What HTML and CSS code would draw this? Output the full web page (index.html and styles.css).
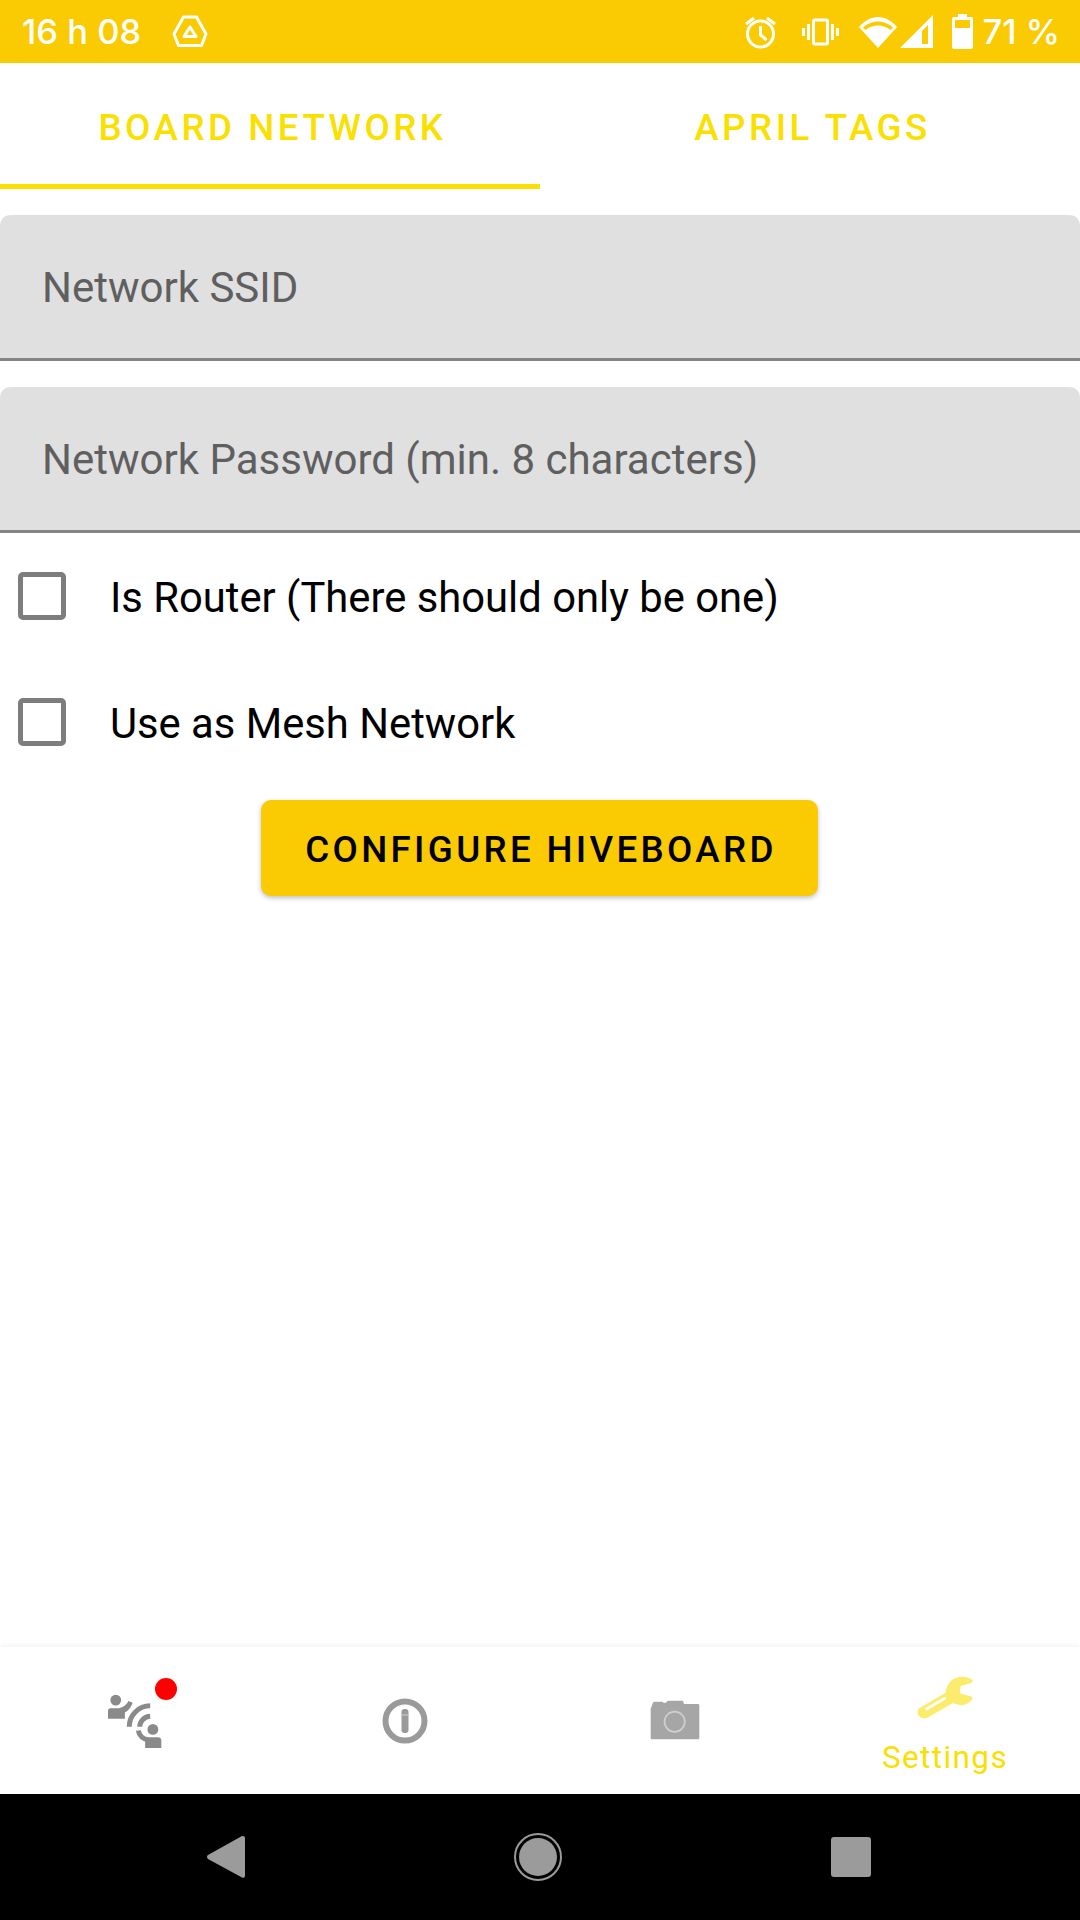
FILE: index.html
```html
<!DOCTYPE html>
<html lang="en">
<head>
    <meta charset="UTF-8">
    <meta name="viewport" content="width=device-width, initial-scale=1.0">
    <title>Settings</title>
    <link rel="stylesheet" href="styles.css">
</head>
<body>
    <div class="status-bar">
        <div class="status-left">
            <span class="status-time">16 h 08</span>
            <svg class="icon-drive" width="36" height="33" viewBox="0 0 36 33" fill="none" stroke="#fff" stroke-width="3" stroke-linejoin="round">
                <path d="M11.500 2h13l9.500 17-4.500 11.500H6.500L2 19z"/>
                <path d="M18 12l6 9.500H12z"/>
            </svg>
        </div>
        <div class="status-right">
            <svg class="icon-alarm" width="33" height="34" viewBox="0 0 33 34" fill="none" stroke="#fff" stroke-width="3">
                <circle cx="16.5" cy="19" r="13"/>
                <path d="M16.5 11v9l6 5"/>
                <path d="M2 9l8-6M31 9l-8-6"/>
            </svg>
            <svg class="icon-vibrate" width="37" height="28" viewBox="0 0 37 28" fill="none" stroke="#fff" stroke-width="3">
                <rect x="11.5" y="2" width="14" height="24" rx="1.5"/>
                <path d="M6.5 6v16M1.5 10v8M30.5 6v16M35.5 10v8"/>
            </svg>
            <svg class="icon-wifi" width="40" height="32" viewBox="0 0 40 32">
                <path fill="#fff" d="M20 32L1 11C6 5 13 1 20 1s14 4 19 10z"/>
                <path fill="#facb02" d="M20 8.500c-4.500 0-9 1.500-12.500 4.500L5 10.500C9 7 14.500 4.500 20 4.500S31 7 35 10.500L32.500 13C29 10 24.500 8.500 20 8.500z" transform="translate(0 1)"/>
            </svg>
            <svg class="icon-signal" width="33" height="33" viewBox="0 0 33 33">
                <path fill="#fff" d="M33 0v33H0z"/>
                <path fill="#facb02" d="M28 10v19h-6V16z"/>
            </svg>
            <svg class="icon-battery" width="21" height="35" viewBox="0 0 21 35">
                <path fill="#fff" d="M6 0h9v3h4a2 2 0 0 1 2 2v28a2 2 0 0 1-2 2H2a2 2 0 0 1-2-2V5a2 2 0 0 1 2-2h4z"/>
                <rect fill="#facb02" x="3" y="6" width="15" height="8"/>
            </svg>
            <span class="status-battery">71 %</span>
        </div>
    </div>

    <div class="tabs">
        <div class="tab tab-active">BOARD NETWORK</div>
        <div class="tab">APRIL TAGS</div>
    </div>

    <main class="content">
        <div class="field">Network SSID</div>
        <div class="field">Network Password (min. 8 characters)</div>

        <label class="check-row">
            <span class="check-box"></span>
            <span>Is Router (There should only be one)</span>
        </label>
        <label class="check-row">
            <span class="check-box"></span>
            <span>Use as Mesh Network</span>
        </label>

        <div class="button-row">
            <button class="configure-btn">CONFIGURE HIVEBOARD</button>
        </div>
    </main>

    <nav class="bottom-nav">
        <div class="nav-item">
            <span class="nav-icon-wrap">
                <svg class="nav-icon-soft" width="54" height="54" viewBox="85 100 160 160" fill="#8a8a8a">
                    <circle cx="108" cy="118" r="16"/>
                    <path d="M85 173V150q0-8 8-8h25c12-2 22-10 28-21l12 5c-6 16-13 24-23 29v18z"/>
                    <path d="M210 135a62 62 0 0 0-62 62M210 166a32 32 0 0 0-31 31M175 208a32 32 0 0 0 30 28" fill="none" stroke="#8a8a8a" stroke-width="15"/>
                    <circle cx="218" cy="205" r="16"/>
                    <path d="M195 260V238q0-10 10-10h27q11 0 11 10v22z"/>
                </svg>
                <span class="nav-badge"></span>
            </span>
        </div>
        <div class="nav-item">
            <svg class="nav-icon-soft" width="46" height="46" viewBox="0 0 46 46">
                <circle cx="23" cy="23" r="19.500" fill="none" stroke="#9a9a9a" stroke-width="6"/>
                <rect x="19.500" y="11" width="7" height="24" rx="3" fill="#9a9a9a"/>
                <rect x="19.500" y="16.500" width="7" height="1" fill="#d0d0d0"/>
            </svg>
        </div>
        <div class="nav-item nav-item-camera">
            <svg class="nav-icon-soft" width="50" height="40" viewBox="90 120 148 118">
                <path fill="#a6a6a6" d="M92 146l6-16q0-5 5-5h22q5 0 5 4l8-2q2-5 7-5h40q5 0 5 10h42q4 0 4 4v96q0 4-4 4H96q-4 0-4-4z"/>
                <circle cx="163" cy="184" r="30" fill="none" stroke="#cfcfcf" stroke-width="5"/>
            </svg>
        </div>
        <div class="nav-item nav-item-active">
            <svg class="nav-icon-soft" width="60" height="45" viewBox="885 50 180 135">
                <path fill="#fcec6e" d="M1015 57c15-4 33 1 43 8l-2 8-34 10-2 22 36 10 2 7c-10 12-28 21-38 18l-22-5-76 43c-10 5-24 2-28-10-3-9 0-16 6-20l77-45c2-20 15-43 38-46z"/>
                <path fill="#fff" d="M915 150l60-35 4 7-60 35z"/>
            </svg>
            <span class="nav-label">Settings</span>
        </div>
    </nav>

    <div class="system-nav">
        <svg width="38" height="44" viewBox="0 0 38 44">
            <path fill="#9b9b9b" d="M36 1a2 2 0 0 1 2 2v38a2 2 0 0 1-3 1.500L1 24a2.500 2.500 0 0 1 0-4L35 1z"/>
        </svg>
        <svg width="48" height="48" viewBox="0 0 48 48">
            <circle cx="24" cy="24" r="23" fill="none" stroke="#9b9b9b" stroke-width="2"/>
            <circle cx="24" cy="24" r="19" fill="#9b9b9b"/>
        </svg>
        <span class="recent-square"></span>
    </div>
</body>
</html>
```

FILE: styles.css
```css
* {
    box-sizing: border-box;
}
body {
    margin: 0;
    width: 1080px;
    height: 1920px;
    display: flex;
    flex-direction: column;
    font-family: Roboto, sans-serif;
    background-color: #fff;
    overflow: hidden;
}

.status-bar {
    height: 63px;
    background-color: #facb02;
    color: #fff;
    display: flex;
    align-items: center;
    justify-content: space-between;
    padding: 0 20px 0 22px;
    font-family: Inter, sans-serif;
    font-size: 34.5px;
    font-weight: 500;
}
.status-left,
.status-right {
    display: flex;
    align-items: center;
}
.status-left {
    gap: 31px;
}
.status-right .icon-alarm {
    margin-right: 24.5px;
}
.status-right .icon-vibrate {
    margin-right: 19px;
}
.status-right .icon-wifi {
    margin-right: 2px;
}
.status-right .icon-signal {
    margin-right: 19px;
}
.status-right .icon-battery {
    margin-right: 10px;
}

.tabs {
    height: 126px;
    display: flex;
}
.tab {
    flex: 1;
    display: flex;
    align-items: center;
    justify-content: center;
    padding: 2px 0 0 5px;
    color: #f9e000;
    font-size: 36.75px;
    font-weight: 500;
    letter-spacing: 3.5px;
}
.tab-active {
    box-shadow: inset 0 -5px 0 #f9e000;
}

.content {
    flex: 1;
}
.field {
    height: 146px;
    margin-top: 26px;
    padding: 2px 0 0 42px;
    display: flex;
    align-items: center;
    background-color: #e0e0e0;
    border-bottom: 3px solid #858585;
    border-radius: 10px 10px 0 0;
    color: #5f5f5f;
    font-size: 42px;
}
.check-row {
    height: 126px;
    padding: 0 0 0 18px;
    display: flex;
    align-items: center;
    gap: 44px;
    font-size: 41.75px;
    color: #000;
}
.check-row span:last-child {
    padding-top: 2px;
}
.check-box {
    width: 48px;
    height: 48px;
    border: 5px solid #7d7d7d;
    border-radius: 5px;
}
.button-row {
    margin-top: 15px;
    padding-right: 2px;
    display: flex;
    justify-content: center;
}
.configure-btn {
    width: 557px;
    height: 96px;
    padding: 2px 0 0 4px;
    border: none;
    border-radius: 10px;
    background-color: #facb02;
    color: #000;
    font-family: Roboto, sans-serif;
    font-size: 36.75px;
    font-weight: 500;
    letter-spacing: 3.3px;
    box-shadow: 0 2px 5px rgba(0, 0, 0, 0.25);
}

.bottom-nav {
    height: 147px;
    display: grid;
    grid-template-columns: repeat(4, 1fr);
    box-shadow: 0 -2px 4px rgba(0, 0, 0, 0.05);
}
.nav-item {
    display: flex;
    flex-direction: column;
    align-items: center;
    justify-content: center;
}
.nav-item-camera {
    padding-bottom: 2px;
}
.nav-item-active {
    padding-top: 10px;
    gap: 19px;
}
.nav-icon-wrap {
    position: relative;
    display: block;
    width: 54px;
    height: 54px;
}
.nav-icon-soft {
    filter: blur(0.5px);
}
.nav-badge {
    position: absolute;
    top: -16px;
    right: -15px;
    width: 22px;
    height: 22px;
    border-radius: 50%;
    background-color: #ff0000;
}
.nav-label {
    color: #f9e000;
    font-size: 31.5px;
    letter-spacing: 1.4px;
}

.system-nav {
    height: 126px;
    background-color: #000;
    display: flex;
    align-items: center;
    justify-content: space-between;
    padding: 0 209px 0 207px;
}
.recent-square {
    width: 40px;
    height: 40px;
    border-radius: 3px;
    background-color: #9b9b9b;
}
```
